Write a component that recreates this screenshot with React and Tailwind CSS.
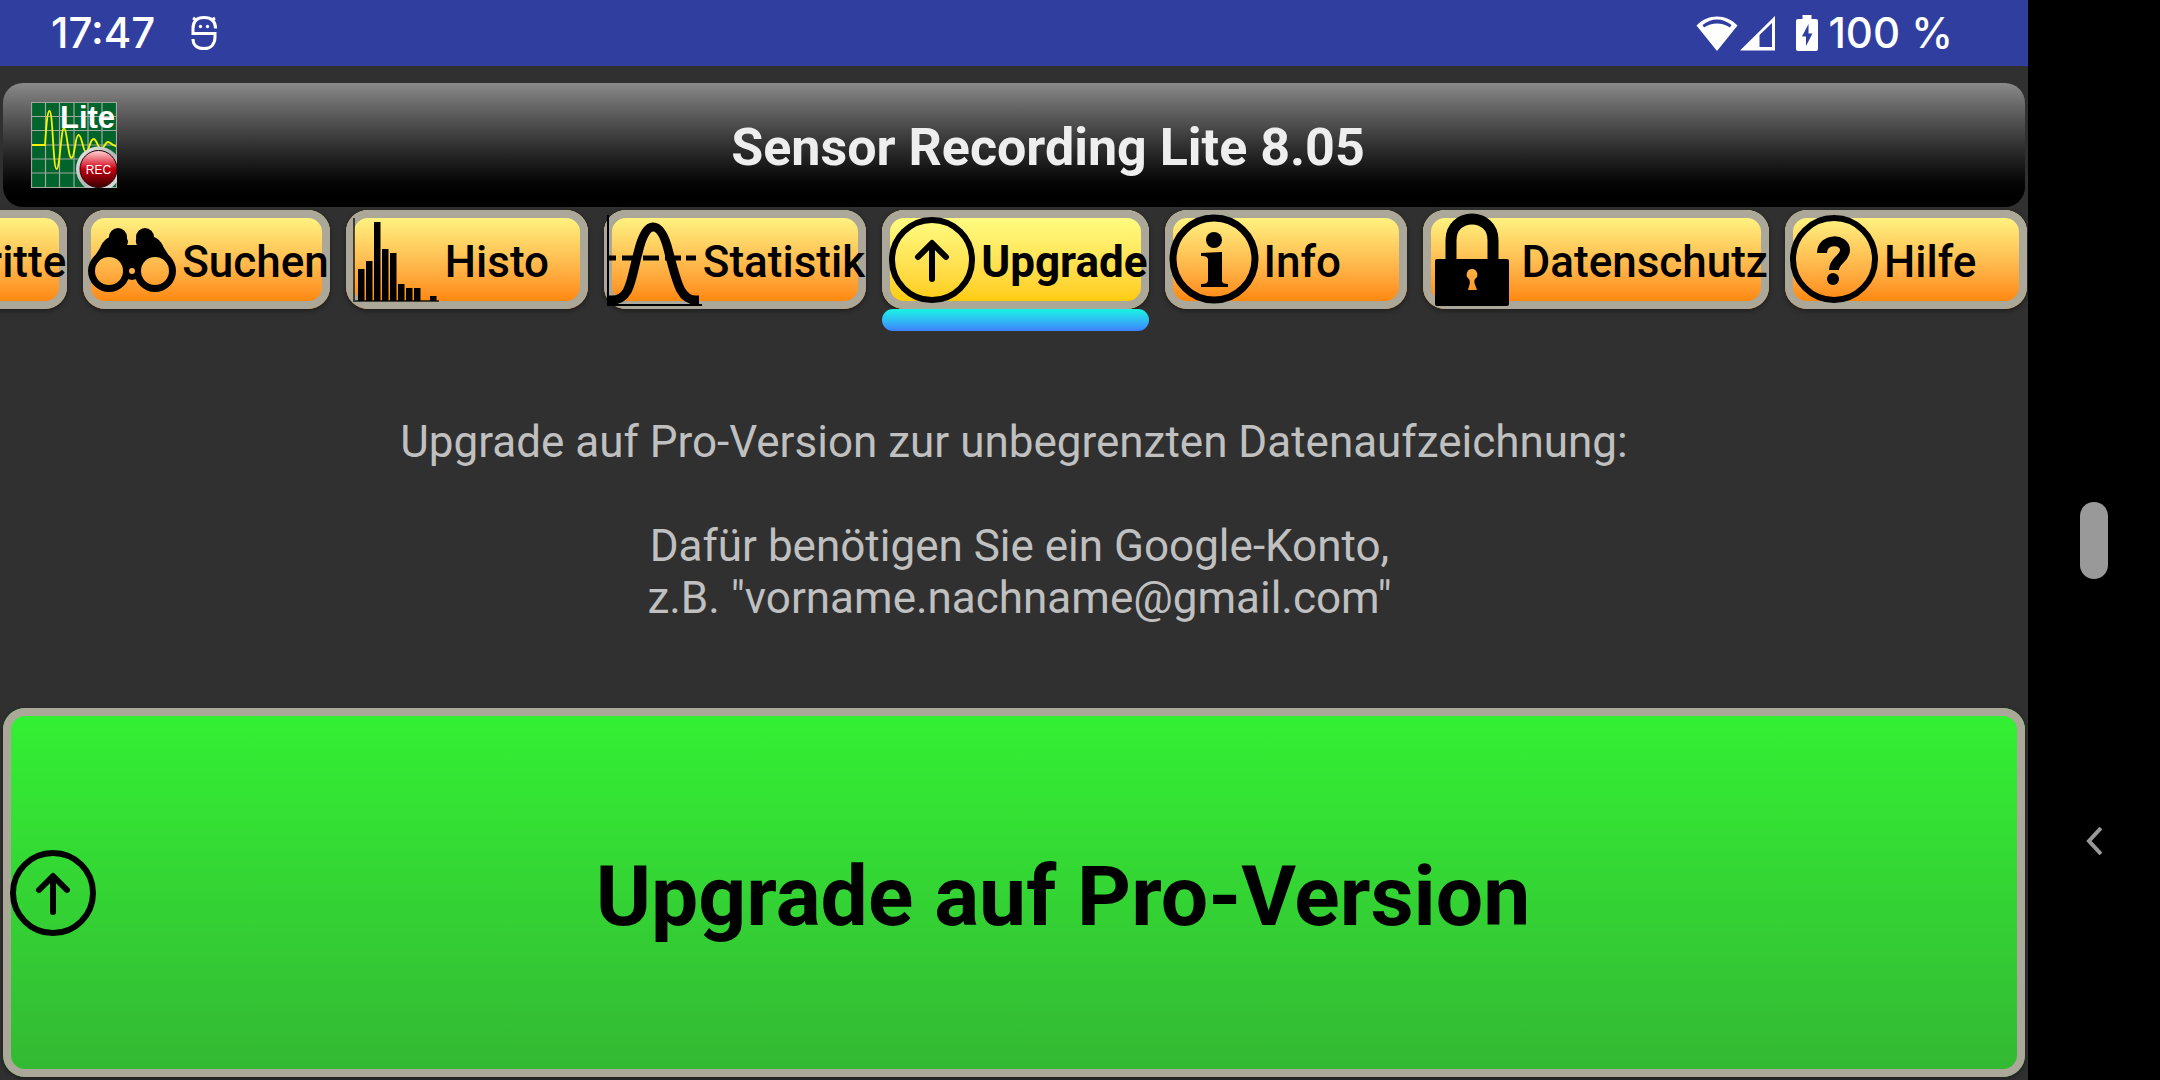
import React from "react";

function UpIcon() {
  return (
    <svg viewBox="0 0 90 99" className="h-[99px] w-[90px] shrink-0 overflow-visible" fill="none" stroke="#000" aria-hidden="true">
      <circle cx="50" cy="50" r="40" strokeWidth="6" />
      <path d="M50 69V34M36 47L50 33L64 47" strokeWidth="6" strokeLinecap="round" strokeLinejoin="round" />
    </svg>
  );
}

function BinocularsIcon() {
  return (
    <svg viewBox="0 0 90 99" className="h-[99px] w-[90px] shrink-0 overflow-visible" aria-hidden="true">
      <mask id="lenses" maskUnits="userSpaceOnUse" x="0" y="0" width="99" height="99">
        <rect width="99" height="99" fill="#fff" />
        <circle cx="26" cy="61" r="14" fill="#000" />
        <circle cx="72" cy="61" r="14" fill="#000" />
        <circle cx="49" cy="61" r="3" fill="#000" />
      </mask>
      <g mask="url(#lenses)">
        <circle cx="26" cy="61" r="21" />
        <circle cx="72" cy="61" r="21" />
        <circle cx="35" cy="27" r="9" />
        <circle cx="62" cy="27" r="9" />
        <circle cx="49" cy="61" r="9" />
        <path d="M27 27C22 29 19 33 17 38L8 52L26 64L46 60H52L72 64L90 52L81 38C79 33 76 29 71 27L54 27C52 31 53 33 54 35H44C45 33 46 31 43 27Z" />
      </g>
    </svg>
  );
}

function HistogramIcon() {
  const bars = [
    [12, 59], [20, 51], [28, 12], [36, 39], [44, 43], [52, 74], [60, 78], [68, 78], [84, 86],
  ];
  return (
    <svg viewBox="0 0 90 99" className="h-[99px] w-[90px] shrink-0 overflow-visible" aria-hidden="true">
      <path d="M8 8V91H93" fill="none" stroke="#000" strokeOpacity="0.65" strokeWidth="2" />
      {bars.map(([x, y]) => (
        <rect key={x} x={x} y={y} width="6.500" height={91 - y} />
      ))}
    </svg>
  );
}

function BellCurveIcon() {
  return (
    <svg viewBox="0 0 90 99" className="h-[99px] w-[90px] shrink-0 overflow-visible" fill="none" stroke="#000" aria-hidden="true">
      <path d="M4 5V95H98" strokeWidth="2" />
      <path d="M4 90H8C27 90 27 68 34 43C38 26 43 17 49 17C56 17 61 26 65 43C73 72 76 90 92 90H95" strokeWidth="9" />
      <path d="M4 48H12M18 48H34M39 48H55M61 48H77M82 48H92" strokeWidth="5" />
    </svg>
  );
}

function InfoIcon() {
  return (
    <svg viewBox="0 0 90 99" className="h-[99px] w-[90px] shrink-0 overflow-visible" aria-hidden="true">
      <circle cx="49" cy="49" r="41" fill="none" stroke="#000" strokeWidth="7" />
      <circle cx="49" cy="30" r="8" />
      <path d="M36 43L57 42V71C57 73 59 74 63 74V77H36V74C41 74 43 73 43 70V50C43 47 41 46 36 46Z" />
    </svg>
  );
}

function LockIcon() {
  return (
    <svg viewBox="0 0 90 99" className="h-[99px] w-[90px] shrink-0" aria-hidden="true">
      <path d="M28 53V30C28 2 70 2 70 30V53" fill="none" stroke="#000" strokeWidth="11" />
      <path
        fillRule="evenodd"
        d="M14 49H84Q86 49 86 51V94Q86 96 84 96H14Q12 96 12 94V51Q12 49 14 49ZM49 59A5.500 5.500 0 0 0 46 69C48 72 46 76 45 80H54C53 76 50 72 52 69A5.500 5.500 0 0 0 49 59Z"
      />
    </svg>
  );
}

function HelpIcon() {
  return (
    <svg viewBox="0 0 90 99" className="h-[99px] w-[90px] shrink-0 overflow-visible" fill="none" stroke="#000" aria-hidden="true">
      <circle cx="49" cy="49" r="41" strokeWidth="6" />
      <path d="M37 43C37 28 60 28 60 40C60 49 49 50 49 60" strokeWidth="10" />
      <circle cx="48" cy="69" r="6" fill="#000" stroke="none" />
    </svg>
  );
}

function AppLogo() {
  return (
    <svg viewBox="0 0 86 86" className="size-[86px] shrink-0" aria-hidden="true">
      <defs>
        <linearGradient id="recRed" x1="0" y1="0" x2="0" y2="1">
          <stop offset="0" stopColor="#ffd5d5" />
          <stop offset="0.38" stopColor="#dd3344" />
          <stop offset="0.5" stopColor="#c4000f" />
          <stop offset="1" stopColor="#3a0000" />
        </linearGradient>
        <linearGradient id="recRing" x1="0" y1="0" x2="1" y2="1">
          <stop offset="0" stopColor="#f2f2f2" />
          <stop offset="0.5" stopColor="#b5b5b5" />
          <stop offset="1" stopColor="#e6e6e6" />
        </linearGradient>
      </defs>
      <rect width="86" height="86" fill="#00642c" />
      <path
        d="M.5 0V86M14.500 0V86M28.500 0V86M43 0V86M57 0V86M71 0V86M85.500 0V86M0 .5H86M0 14.500H86M0 28.500H86M0 43H86M0 57H86M0 71H86M0 85.500H86"
        stroke="#a0a8a0"
        strokeWidth="1.200"
        fill="none"
      />
      <path
        d="M1 43H14C15 30 16 9 18.500 9C22 9 22 67 25.500 67C29 67 30 26 33 26C36 26 37 56 40.500 56C44 56 44 33 47.500 33C51 33 52 50 55 50C58 50 59 37 62.500 37C66 37 67 47 70 47C73 47 74 40 77 40C80 40 81 44 85 44"
        fill="none"
        stroke="#f4f400"
        strokeWidth="1.800"
      />
      <text x="29" y="26" fontFamily="Liberation Sans, Arial, sans-serif" fontWeight="700" fontSize="31" fill="#fff">
        Lite
      </text>
      <circle cx="67.500" cy="67" r="22.500" fill="url(#recRing)" />
      <circle cx="67.500" cy="67" r="18.500" fill="url(#recRed)" stroke="#200" strokeWidth="1" />
      <text x="67.500" y="71.500" textAnchor="middle" fontFamily="Liberation Sans, Arial, sans-serif" fontSize="12" fill="#fff">
        REC
      </text>
    </svg>
  );
}

function StatusBar() {
  return (
    <div className="flex h-[66px] items-center bg-[#303f9f] pr-[75px] pl-[51px] font-[Inter,sans-serif] text-[42px] leading-none font-medium text-white">
      <span>17:47</span>
      <svg viewBox="0 0 26 36" className="ml-9 h-9 w-[26px]" fill="none" stroke="#fff" strokeWidth="3" aria-hidden="true">
        <path d="M24.500 13.500C24.500 6 20 2.500 13 2.500S2 6 2 13.500V18.500H24V22C24 29 20 33.500 13 33.500S2 30 2 24" />
        <path d="M2 3L6 5.500M24 3L20 5.500" />
        <circle cx="9.500" cy="11.500" r="1.700" fill="#fff" stroke="none" />
        <circle cx="16.500" cy="11.500" r="1.700" fill="#fff" stroke="none" />
      </svg>
      <div className="ml-auto flex items-center">
        <svg viewBox="0 0 42 36" className="h-9 w-[42px]" fill="#fff" aria-hidden="true">
          <path
            fillRule="evenodd"
            d="M21 36L0.500 10.500C12 -1.500 30 -1.500 41.500 10.500ZM6.500 10L8 12.500C16 7 26 7 34 12.500L35.500 10C27 2.500 15 2.500 6.500 10Z"
          />
        </svg>
        <svg viewBox="0 0 36 36" className="ml-[2px] h-9 w-9" aria-hidden="true">
          <path fill="#fff" fillRule="evenodd" d="M0 35.500L35 1V35.500ZM19.500 20V32H32V8Z" />
        </svg>
        <svg viewBox="0 0 22 36" className="ml-5 h-9 w-[22px]" aria-hidden="true">
          <path
            fill="#fff"
            fillRule="evenodd"
            d="M6.500 0H15.500V4H20Q22 4 22 6V34Q22 36 20 36H2Q0 36 0 34V6Q0 4 2 4H6.500ZM12.500 9L6 21.500H10V31L16.500 18.500H12.500Z"
          />
        </svg>
        <span className="ml-[10px]">100 %</span>
      </div>
    </div>
  );
}

const tabs = [
  { label: "Schritte", icon: null },
  { label: "Suchen", icon: <BinocularsIcon /> },
  { label: "Histo", icon: <HistogramIcon /> },
  { label: "Statistik", icon: <BellCurveIcon /> },
  { label: "Upgrade", icon: <UpIcon />, active: true },
  { label: "Info", icon: <InfoIcon /> },
  { label: "Datenschutz", icon: <LockIcon /> },
  { label: "Hilfe", icon: <HelpIcon /> },
];

const tabBase =
  "flex h-[99px] min-w-[242px] items-center gap-[9px] rounded-[22px] bg-linear-to-b from-8% to-92% pr-px text-[44px] leading-[52px] text-black shadow-[inset_0_0_0_8px_#aba899,0_2px_5px_#0006]";

function Tab({ label, icon, active }) {
  return (
    <li className="shrink-0">
      <button
        type="button"
        aria-current={active ? "page" : undefined}
        className={
          active
            ? `${tabBase} from-[#fffc80] to-[#ffcc08] font-bold`
            : `${tabBase} from-[#fff280] to-[#ff880a] font-medium`
        }
      >
        {icon || <span className="w-[90px]" />}
        <span className="pt-1">{label}</span>
      </button>
      {active && <div className="h-[22px] rounded-full bg-linear-to-b from-[#18f5e0] to-[#4080ff]" />}
    </li>
  );
}

export default function App() {
  return (
    <div className="flex min-h-screen bg-black font-[Roboto,sans-serif]">
      <main className="flex min-w-0 flex-1 flex-col bg-[#303030]">
        <StatusBar />
        <header className="mx-[3px] mt-[17px] flex h-[124px] items-center rounded-[20px] bg-linear-to-b from-[#8a8a8a] to-black pr-[46px] pl-7">
          <AppLogo />
          <h1 className="flex-1 pt-1.5 text-center text-[52px] leading-[60px] font-bold text-[#eeeeee]">
            Sensor Recording Lite 8.05
          </h1>
        </header>
        <nav className="mt-[3px] overflow-x-clip pr-px">
          <ul className="flex h-[121px] justify-end gap-4">
            {tabs.map((tab) => (
              <Tab key={tab.label} {...tab} />
            ))}
          </ul>
        </nav>
        <section className="mt-[85px] text-center text-[44px] leading-[52px] text-[#c0c0c0]">
          <p>Upgrade auf Pro-Version zur unbegrenzten Datenaufzeichnung:</p>
          <p className="mt-[52px]">
            {"\u00a0"}Dafür benötigen Sie ein Google-Konto,
            <br />
            {"\u00a0"}z.B. "vorname.nachname@gmail.com"
          </p>
        </section>
        <button
          type="button"
          className="mx-[3px] mt-[84px] mb-[3px] flex flex-1 items-center gap-2 rounded-[22px] bg-linear-to-b from-[#33f033] from-2% to-[#33b933] to-98% text-[84px] leading-[98px] font-bold text-black shadow-[inset_0_0_0_8px_#aba899,0_2px_5px_#0006]"
        >
          <UpIcon />
          <span className="flex-1 pt-2">Upgrade auf Pro-Version</span>
        </button>
      </main>
      <aside className="flex w-[132px] shrink-0 flex-col items-center pt-[502px]">
        <button type="button" aria-label="Startseite" className="h-[77px] w-7 rounded-full bg-[#999999]" />
        <button type="button" aria-label="Zurück" className="mt-[248px]">
          <svg viewBox="0 0 16 28" className="h-7 w-4" fill="none" stroke="#999" strokeWidth="4" aria-hidden="true">
            <path d="M15 1L3 14L15 27" />
          </svg>
        </button>
      </aside>
    </div>
  );
}
